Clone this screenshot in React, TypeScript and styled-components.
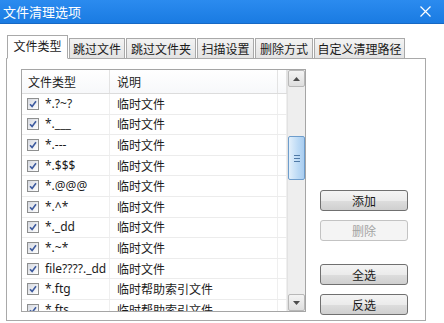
import styled, { createGlobalStyle } from "styled-components";

const GlobalStyle = createGlobalStyle`
  html, body {
    margin: 0;
    padding: 0;
    background: #ffffff;
  }
  body {
    font-family: "Noto Sans", "Noto Sans CJK SC", sans-serif;
  }
`;

const Window = styled.div`
  width: 444px;
  height: 323px;
  background: #ffffff;
  display: flex;
  flex-direction: column;
  overflow: hidden;
  font-family: "Noto Sans", "Noto Sans CJK SC", sans-serif;
  color: #1c1c1c;
`;

const TitleBar = styled.div`
  height: 24px;
  flex-shrink: 0;
  background: linear-gradient(#2b8bef, #1a7be2);
  border-bottom: 1px solid #1668c4;
  box-sizing: border-box;
  display: flex;
  align-items: center;
  justify-content: space-between;
  padding: 0 13px 0 3px;
  color: #ffffff;
  font-family: "Noto Sans CJK SC", sans-serif;
  font-size: 13px;
  line-height: 1;
`;

const Body = styled.div`
  flex: 1;
  display: flex;
  flex-direction: column;
  padding: 11px 18px 2px 6px;
  min-height: 0;
`;

const TabStrip = styled.div`
  display: flex;
  align-items: flex-end;
  height: 24px;
  padding-left: 1px;
  margin-bottom: -1px;
  position: relative;
  z-index: 1;
`;

const Tab = styled.div<{ $active?: boolean; $w: number }>`
  width: ${(p) => p.$w}px;
  height: ${(p) => (p.$active ? 24 : 21)}px;
  box-sizing: border-box;
  margin-right: 1px;
  border: 1px solid #a9a9a9;
  border-bottom: ${(p) => (p.$active ? "1px solid #ffffff" : "1px solid #a9a9a9")};
  background: ${(p) =>
    p.$active ? "#ffffff" : "linear-gradient(#f3f3f3, #e3e3e3)"};
  display: flex;
  align-items: center;
  justify-content: center;
  font-family: "Noto Sans CJK SC", sans-serif;
  font-size: 12px;
  line-height: 1;
  padding-bottom: ${(p) => (p.$active ? 2 : 0)}px;
  color: #1a1a1a;
`;

const Panel = styled.div`
  flex: 1;
  border: 1px solid #a9a9a9;
  display: flex;
  align-items: flex-start;
  padding: 10px 0 5px 14px;
  min-height: 0;
`;

const ListBox = styled.div`
  width: 285px;
  height: 243px;
  box-sizing: border-box;
  border: 1px solid #a5a5a5;
  display: flex;
  overflow: hidden;
`;

const Table = styled.div`
  flex: 1;
  display: flex;
  flex-direction: column;
  overflow: hidden;
`;

const Columns = "88px 168px 1fr";

const HeaderRow = styled.div`
  height: 24px;
  flex-shrink: 0;
  display: grid;
  grid-template-columns: ${Columns};
  border-bottom: 1px solid #dcdcdc;
  background: linear-gradient(#ffffff, #f7f8fa);
  box-sizing: border-box;
`;

const HeaderCell = styled.div<{ $pad?: number }>`
  display: flex;
  align-items: center;
  padding-left: ${(p) => p.$pad ?? 6}px;
  border-right: 1px solid #e3e3e3;
  font-family: "Noto Sans CJK SC", sans-serif;
  font-size: 12px;
  line-height: 1;
`;

const Row = styled.div`
  height: 20.6px;
  flex-shrink: 0;
  display: grid;
  grid-template-columns: ${Columns};
  border-bottom: 1px solid #ececec;
  box-sizing: border-box;
`;

const Cell = styled.div`
  display: flex;
  align-items: center;
  padding-left: 5px;
  gap: 6px;
  border-right: 1px solid #efefef;
  font-size: 12px;
  line-height: 1;
  white-space: nowrap;
  overflow: hidden;
`;

const DescCell = styled(Cell)`
  font-family: "Noto Sans CJK SC", sans-serif;
  padding-left: 7px;
`;

const CheckBox = styled.span`
  width: 12px;
  height: 12px;
  box-sizing: border-box;
  flex-shrink: 0;
  border: 1px solid #8e8f8f;
  background: linear-gradient(135deg, #d6d9e0, #ffffff);
  display: flex;
  align-items: center;
  justify-content: center;
`;

const ScrollBar = styled.div`
  width: 17px;
  flex-shrink: 0;
  background: #eeeeee;
  border-left: 1px solid #e2e2e2;
  display: flex;
  flex-direction: column;
`;

const ArrowButton = styled.div<{ $bottom?: boolean }>`
  height: 17px;
  box-sizing: border-box;
  margin-top: ${(p) => (p.$bottom ? "auto" : "0")};
  border: 1px solid #b8b8b8;
  border-radius: 2px;
  background: linear-gradient(#f4f4f4, #dedede);
  display: flex;
  align-items: center;
  justify-content: center;
`;

const Thumb = styled.div`
  height: 44px;
  margin-top: 49px;
  box-sizing: border-box;
  border: 1px solid #6e9dcc;
  border-radius: 2px;
  background: linear-gradient(90deg, #e3f0fb, #bcdaf5 60%, #a9cdf0);
  display: flex;
  flex-direction: column;
  align-items: center;
  justify-content: center;
  gap: 2px;
`;

const Grip = styled.span`
  width: 6px;
  height: 1px;
  background: #4f79a6;
`;

const ButtonColumn = styled.div`
  margin-left: 14px;
  align-self: stretch;
  display: flex;
  flex-direction: column;
  justify-content: flex-end;
`;

const Button = styled.div<{ $disabled?: boolean; $gap: number }>`
  width: 88px;
  height: 21px;
  margin-top: ${(p) => p.$gap}px;
  box-sizing: border-box;
  border: 1px solid ${(p) => (p.$disabled ? "#c3c3c3" : "#707070")};
  border-radius: 3px;
  background: ${(p) =>
    p.$disabled
      ? "#f4f4f4"
      : "linear-gradient(#f4f4f4 0%, #ebebeb 50%, #dddddd 51%, #cfcfcf 100%)"};
  color: ${(p) => (p.$disabled ? "#a3a3a3" : "#1a1a1a")};
  display: flex;
  align-items: center;
  justify-content: center;
  font-family: "Noto Sans CJK SC", sans-serif;
  font-size: 12px;
  line-height: 1;
`;

const tabs = [
  { label: "文件类型", w: 61 },
  { label: "跳过文件", w: 56 },
  { label: "跳过文件夹", w: 70 },
  { label: "扫描设置", w: 57 },
  { label: "删除方式", w: 58 },
  { label: "自定义清理路径", w: 91 },
];

const rows = [
  { type: "*.?~?", desc: "临时文件" },
  { type: "*.___", desc: "临时文件" },
  { type: "*.---", desc: "临时文件" },
  { type: "*.$$$", desc: "临时文件" },
  { type: "*.@@@", desc: "临时文件" },
  { type: "*.^*", desc: "临时文件" },
  { type: "*._dd", desc: "临时文件" },
  { type: "*.~*", desc: "临时文件" },
  { type: "file????._dd", desc: "临时文件" },
  { type: "*.ftg", desc: "临时帮助索引文件" },
  { type: "*.fts", desc: "临时帮助索引文件" },
];

function Check() {
  return (
    <CheckBox>
      <svg width="8" height="8" viewBox="0 0 8 8">
        <path
          d="M1 4.2 L3.1 6.4 L7 1.2"
          fill="none"
          stroke="#3d5a9e"
          strokeWidth="1.6"
        />
      </svg>
    </CheckBox>
  );
}

function App() {
  return (
    <>
      <GlobalStyle />
      <Window>
        <TitleBar>
          <span>文件清理选项</span>
          <svg width="11" height="11" viewBox="0 0 11 11">
            <path d="M0.5 0.5 L10.5 10.5 M10.5 0.5 L0.5 10.5" stroke="#ffffff" strokeWidth="1.2" />
          </svg>
        </TitleBar>
        <Body>
          <TabStrip>
            {tabs.map((t, i) => (
              <Tab key={t.label} $active={i === 0} $w={t.w}>
                {t.label}
              </Tab>
            ))}
          </TabStrip>
          <Panel>
            <ListBox>
              <Table>
                <HeaderRow>
                  <HeaderCell>文件类型</HeaderCell>
                  <HeaderCell $pad={7}>说明</HeaderCell>
                  <HeaderCell />
                </HeaderRow>
                {rows.map((r) => (
                  <Row key={r.type}>
                    <Cell>
                      <Check />
                      {r.type}
                    </Cell>
                    <DescCell>{r.desc}</DescCell>
                    <Cell />
                  </Row>
                ))}
              </Table>
              <ScrollBar>
                <ArrowButton>
                  <svg width="7" height="4" viewBox="0 0 7 4">
                    <path d="M0 4 L3.5 0 L7 4 Z" fill="#4d4d4d" />
                  </svg>
                </ArrowButton>
                <Thumb>
                  <Grip />
                  <Grip />
                  <Grip />
                </Thumb>
                <ArrowButton $bottom>
                  <svg width="7" height="4" viewBox="0 0 7 4">
                    <path d="M0 0 L3.5 4 L7 0 Z" fill="#4d4d4d" />
                  </svg>
                </ArrowButton>
              </ScrollBar>
            </ListBox>
            <ButtonColumn>
              <Button $gap={0}>添加</Button>
              <Button $gap={9} $disabled>
                删除
              </Button>
              <Button $gap={23}>全选</Button>
              <Button $gap={9}>反选</Button>
            </ButtonColumn>
          </Panel>
        </Body>
      </Window>
    </>
  );
}

export default App;
